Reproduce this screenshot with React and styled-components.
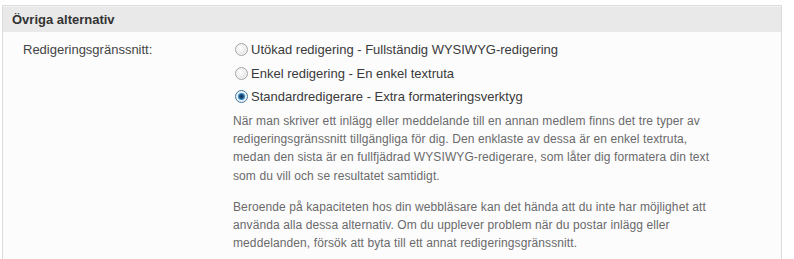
import React from "react";
import styled, { createGlobalStyle } from "styled-components";

const GlobalStyle = createGlobalStyle`
  html, body {
    margin: 0;
    padding: 0;
    background: #ffffff;
  }
  body {
    font-family: "Liberation Sans", Arial, sans-serif;
  }
`;

const Page = styled.div`
  padding: 5px 12px 0 2px;
`;

const Panel = styled.section`
  border: 1px solid #dcdcdc;
  border-bottom: none;
  background: #fcfcfd;
  height: 254px;
  box-sizing: border-box;
`;

const PanelHeader = styled.h3`
  margin: 0;
  height: 25px;
  line-height: 25px;
  padding: 0 9px;
  background: #e9e9e9;
  border-top: 1px solid #f4f4f4;
  font-size: 13px;
  font-weight: bold;
  color: #333333;
`;

const Row = styled.div`
  display: grid;
  grid-template-columns: 210px 1fr;
  padding: 6px 0 0 20px;
`;

const Label = styled.div`
  font-size: 13px;
  color: #444444;
  line-height: 23px;
`;

const Options = styled.div`
  display: flex;
  flex-direction: column;
`;

const Option = styled.label`
  display: flex;
  align-items: center;
  gap: 3px;
  height: 23.5px;
  font-size: 13px;
  color: #3a3a3a;
  cursor: pointer;
`;

const Radio = styled.input.attrs({ type: "radio" })`
  appearance: none;
  margin: 0 0 0 2px;
  width: 13px;
  height: 13px;
  border-radius: 50%;
  border: 1px solid #a4a4a4;
  box-sizing: border-box;
  background: radial-gradient(circle at 40% 40%, #ffffff 0%, #f0f0f0 40%, #d4d4d4 100%);
  box-shadow: inset 0 0 0 1px #f6f6f6;

  &:checked {
    border-color: #47789c;
    background: radial-gradient(circle at 50% 50%, #0b2c4e 0%, #1c5a8e 28%, #62a8da 44%, #e6f0f8 52%, #f2f2f2 100%);
    box-shadow: none;
  }
`;

const Help = styled.div`
  margin-top: 3px;
  width: 494px;
  font-size: 12px;
  line-height: 18.4px;
  letter-spacing: 0.1px;
  color: #6a6a6a;

  p {
    margin: 0 0 12.5px;
  }
`;

const options = [
  "Utökad redigering - Fullständig WYSIWYG-redigering",
  "Enkel redigering - En enkel textruta",
  "Standardredigerare - Extra formateringsverktyg",
];

export default function App() {
  return (
    <>
      <GlobalStyle />
      <Page>
        <Panel>
          <PanelHeader>Övriga alternativ</PanelHeader>
          <Row>
            <Label>Redigeringsgränssnitt:</Label>
            <Options>
              {options.map((text, i) => (
                <Option key={text}>
                  <Radio name="editor" defaultChecked={i === 2} />
                  {text}
                </Option>
              ))}
              <Help>
                <p>
                  När man skriver ett inlägg eller meddelande till en annan medlem finns det tre typer av
                  redigeringsgränssnitt tillgängliga för dig. Den enklaste av dessa är en enkel textruta,
                  medan den sista är en fullfjädrad WYSIWYG-redigerare, som låter dig formatera din text
                  som du vill och se resultatet samtidigt.
                </p>
                <p>
                  Beroende på kapaciteten hos din webbläsare kan det hända att du inte har möjlighet att
                  använda alla dessa alternativ. Om du upplever problem när du postar inlägg eller
                  meddelanden, försök att byta till ett annat redigeringsgränssnitt.
                </p>
              </Help>
            </Options>
          </Row>
        </Panel>
      </Page>
    </>
  );
}
